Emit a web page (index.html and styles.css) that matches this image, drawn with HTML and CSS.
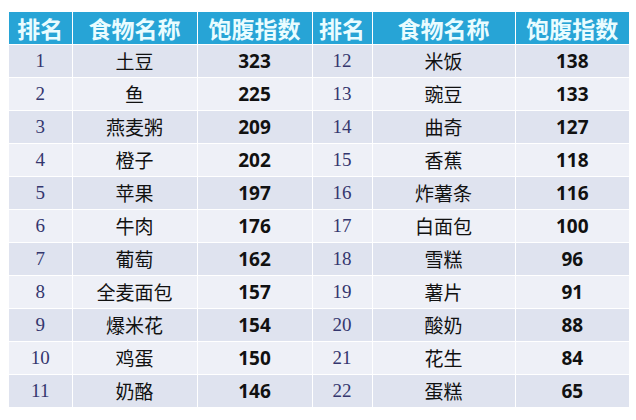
FILE: index.html
```html
<!DOCTYPE html>
<html lang="zh">
<head>
<meta charset="utf-8">
<title>饱腹指数</title>
<link rel="stylesheet" href="styles.css">
</head>
<body>
<table class="sat">
<colgroup>
<col class="c-rank"><col class="c-food"><col class="c-val">
<col class="c-rank2"><col class="c-food2"><col class="c-val2">
</colgroup>
<thead>
<tr><th>排名</th><th>食物名称</th><th>饱腹指数</th><th>排名</th><th>食物名称</th><th>饱腹指数</th></tr>
</thead>
<tbody>
<tr><td class="rank">1</td><td class="food">土豆</td><td class="val">323</td><td class="rank">12</td><td class="food">米饭</td><td class="val">138</td></tr>
<tr><td class="rank">2</td><td class="food">鱼</td><td class="val">225</td><td class="rank">13</td><td class="food">豌豆</td><td class="val">133</td></tr>
<tr><td class="rank">3</td><td class="food">燕麦粥</td><td class="val">209</td><td class="rank">14</td><td class="food">曲奇</td><td class="val">127</td></tr>
<tr><td class="rank">4</td><td class="food">橙子</td><td class="val">202</td><td class="rank">15</td><td class="food">香蕉</td><td class="val">118</td></tr>
<tr><td class="rank">5</td><td class="food">苹果</td><td class="val">197</td><td class="rank">16</td><td class="food">炸薯条</td><td class="val">116</td></tr>
<tr><td class="rank">6</td><td class="food">牛肉</td><td class="val">176</td><td class="rank">17</td><td class="food">白面包</td><td class="val">100</td></tr>
<tr><td class="rank">7</td><td class="food">葡萄</td><td class="val">162</td><td class="rank">18</td><td class="food">雪糕</td><td class="val">96</td></tr>
<tr><td class="rank">8</td><td class="food">全麦面包</td><td class="val">157</td><td class="rank">19</td><td class="food">薯片</td><td class="val">91</td></tr>
<tr><td class="rank">9</td><td class="food">爆米花</td><td class="val">154</td><td class="rank">20</td><td class="food">酸奶</td><td class="val">88</td></tr>
<tr><td class="rank">10</td><td class="food">鸡蛋</td><td class="val">150</td><td class="rank">21</td><td class="food">花生</td><td class="val">84</td></tr>
<tr><td class="rank">11</td><td class="food">奶酪</td><td class="val">146</td><td class="rank">22</td><td class="food">蛋糕</td><td class="val">65</td></tr>
</tbody>
</table>
</body>
</html>
```

FILE: styles.css
```css
html, body {
  margin: 0;
  padding: 0;
  background: #ffffff;
}
body {
  padding: 12px 0 0 9px;
  font-family: "Noto Sans CJK SC", sans-serif;
}
.sat {
  border-collapse: collapse;
  table-layout: fixed;
  width: 620px;
}
.c-rank { width: 63px; }
.c-food { width: 125px; }
.c-val { width: 115px; }
.c-rank2 { width: 60px; }
.c-food2 { width: 143px; }
.c-val2 { width: 114px; }

.sat th, .sat td {
  border: 1px solid #ffffff;
  padding: 0;
  text-align: center;
  vertical-align: middle;
  overflow: hidden;
  white-space: nowrap;
}
.sat thead tr { height: 32px; }
.sat th {
  background: #27a4d6;
  color: #e9fcff;
  font-family: "Noto Sans CJK SC", sans-serif;
  font-weight: 700;
  font-size: 23px;
  line-height: 30px;
  letter-spacing: 0;
  border-top: none;
}
.sat tbody tr { height: 33px; }
.sat tbody tr:nth-child(odd) td { background: #dfe3ef; }
.sat tbody tr:nth-child(even) td { background: #eef0f7; }
.sat tbody tr:last-child td { border-bottom: none; }
.sat th:first-child, .sat td:first-child { border-left: none; }
.sat th:last-child, .sat td:last-child { border-right: none; }

.rank {
  font-family: "Liberation Serif", serif;
  font-size: 19px;
  color: #34366e;
  line-height: 30px;
}
.food {
  font-family: "Noto Sans CJK SC", sans-serif;
  font-size: 19px;
  color: #111111;
  line-height: 30px;
}
.val {
  font-family: "Open Sans", "Liberation Sans", sans-serif;
  font-weight: 700;
  font-size: 19px;
  color: #111111;
  line-height: 30px;
}
```
